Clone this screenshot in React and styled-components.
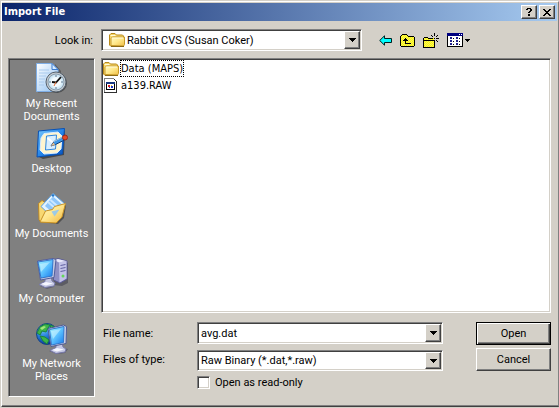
import React from "react";
import styled, { createGlobalStyle, css } from "styled-components";

const face = "#d4d0c8";
const ui = 'Roboto, "Liberation Sans", sans-serif';
const tahoma = '"DejaVu Sans Condensed", "DejaVu Sans", sans-serif';

const GlobalStyle = createGlobalStyle`
  *, *::before, *::after { box-sizing: border-box; }
  body { margin: 0; background: ${face}; }
  button, input, select { font: inherit; color: inherit; border-radius: 0; }
  svg { display: block; flex: none; }
`;

const sunken = css`
  border: 1px solid;
  border-color: #808080 #fff #fff #808080;
  box-shadow: inset 1px 1px #404040, inset -1px -1px ${face};
`;

const raised = css`
  background: ${face};
  border: 1px solid;
  border-color: #fff #404040 #404040 #fff;
  box-shadow: inset -1px -1px #808080;
`;

const Dialog = styled.main`
  display: flex;
  flex-direction: column;
  min-height: 100vh;
  padding: 1px 0 1px 1px;
  background: ${face};
  color: #000;
  font: 11px/13px ${ui};
`;

const Frame = styled.div`
  display: flex;
  flex: 1;
  flex-direction: column;
  padding: 1px 1px 1px 0;
  border: 1px solid;
  border-color: #fff #808080 #404040 #fff;
  box-shadow: inset 0 -1px #808080;
`;

const TitleBar = styled.header`
  display: flex;
  align-items: center;
  gap: 2px;
  height: 18px;
  padding: 0 2px;
  background: linear-gradient(90deg, #0a246a, #a6caf0);
`;

const Title = styled.h1`
  flex: 1;
  margin: 0;
  color: #fff;
  font: bold 11px/16px ${tahoma};
`;

const CaptionButton = styled.button`
  ${raised}
  display: grid;
  place-items: center;
  width: 16px;
  height: 14px;
  padding: 0;
`;

const LookRow = styled.div`
  display: grid;
  grid-template-columns: 91px minmax(120px, 1fr) 179px;
  align-items: center;
  column-gap: 8px;
  padding: 8px 8px 7px 0;
`;

const LookLabel = styled.label`
  text-align: right;
`;

const Tools = styled.div`
  display: flex;
  align-items: center;
  gap: 8px;
  padding-left: 9px;
`;

const ToolButton = styled.button`
  display: grid;
  place-items: center;
  height: 20px;
  padding: 0;
  border: 0;
  background: none;
`;

const Body = styled.div`
  display: flex;
  flex: 1;
  gap: 6px;
  padding: 0 6px 8px 6px;
`;

const Places = styled.nav`
  ${sunken}
  flex: none;
  width: 87px;
  padding-top: 3px;
  background: #808080;
  box-shadow: inset 1px 1px #404040;
`;

const Place = styled.button`
  display: flex;
  flex-direction: column;
  align-items: center;
  gap: 3px;
  width: 100%;
  height: 65px;
  padding: 0;
  border: 0;
  background: none;
  color: #fff;
  line-height: 13px;
`;

const Content = styled.section`
  display: flex;
  flex: 1;
  flex-direction: column;
  min-width: 0;
`;

const FileList = styled.ul`
  ${sunken}
  flex: 1;
  min-height: 120px;
  margin: 0;
  padding: 1px;
  background: #fff;
  list-style: none;
  font: 11px/13px ${tahoma};
`;

const FileItem = styled.li`
  display: flex;
  align-items: center;
  gap: 1px;
  height: 17px;
`;

const FileName = styled.span`
  padding: 1px 0;
  border: 1px dotted ${(p) => (p.$focused ? "#000" : "transparent")};
`;

const Form = styled.form`
  display: grid;
  grid-template-columns: 88px minmax(100px, 1fr) 75px;
  grid-template-rows: 23px 23px 15px;
  gap: 3px 8px;
  padding: 9px 0 8px;
`;

const FieldLabel = styled.label`
  align-self: center;
  padding-left: 2px;
`;

const Combo = styled.div`
  ${sunken}
  display: grid;
  grid-template-columns: ${(p) => (p.$icon ? "22px" : "0")} 1fr 16px;
  align-items: center;
  align-self: ${(p) => (p.$end ? "end" : "start")};
  height: ${(p) => (p.$end ? "21px" : "22px")};
  margin-right: ${(p) => (p.$icon ? "0" : "25px")};
  padding: 1px;
  background: #fff;

  > * { grid-row: 1; }
  > svg { justify-self: end; }
`;

const comboText = css`
  width: 100%;
  min-width: 0;
  height: 100%;
  border: 0;
  outline: 0;
  background: none;
  appearance: none;
`;

const ComboSelect = styled.select`
  ${comboText}
  grid-column: 2 / 4;
  padding: 0 16px 0 2px;
`;

const ComboInput = styled.input`
  ${comboText}
  grid-column: 2;
  padding: 0 2px;
`;

const DropButton = styled.span`
  ${raised}
  display: grid;
  grid-column: 3;
  place-items: center;
  height: 100%;
  pointer-events: none;
`;

const PushButton = styled.button`
  ${raised}
  padding: 0;
  ${(p) =>
    p.$primary &&
    css`
      border-color: #000;
      box-shadow: inset 1px 1px #fff, inset -1px -1px #404040, inset -2px -2px #808080;
    `}
`;

const CheckLabel = styled.label`
  display: flex;
  grid-column: 2;
  align-items: end;
  gap: 5px;
`;

const CheckBox = styled.input`
  ${sunken}
  width: 13px;
  height: 13px;
  margin: 0;
  background: #fff;
  appearance: none;
  &:checked { background: #404040; }
`;

const Triangle = () => (
  <svg width="7" height="4" shapeRendering="crispEdges" aria-hidden="true">
    <path d="M0 0h7v1H0zM1 1h5v1H1zM2 2h3v1H2zM3 3h1v1H3z" />
  </svg>
);

const FolderIcon = () => (
  <svg width="16" height="16" viewBox="0 0 16 16" aria-hidden="true">
    <defs>
      <linearGradient id="fold" x1="0" y1="0" x2="1" y2="1">
        <stop offset="0" stopColor="#fffbc4" />
        <stop offset="0.5" stopColor="#ffe88a" />
        <stop offset="1" stopColor="#efbd45" />
      </linearGradient>
    </defs>
    <path d="M.5 13V3L2 1.5h4L7.5 3h6l1 1v9l-1 1h-12z" fill="#f5d66c" stroke="#b98a1c" />
    <path d="M2 13.500V6.500L3.500 5H15.500v7.500L14.500 14z" fill="url(#fold)" stroke="#c79a2c" />
    <path d="M1.500 3.500h5M3 6h11" stroke="#fffbdc" fill="none" />
    <path d="M2 14.500h13" stroke="#8b6914" />
  </svg>
);

const RawIcon = () => (
  <svg width="16" height="16" viewBox="0 0 16 16" shapeRendering="crispEdges" aria-hidden="true">
    <path d="M1 0h10l3 3v12H1z" fill="#fff" />
    <path d="M1 0h10v1H1zM1 0h1v15H1z" fill="#808080" />
    <path d="M13 3h1v12h-1zM1 14h13v1H1zM11 1h1v1h-1zM12 2h1v1h-1z" fill="#303030" />
    <path d="M3 4h9v8H3z" fill="#000" />
    <path d="M4 6h7v5H4z" fill="#fff" />
    <path d="M3 4h9v2H3z" fill="#183880" />
    <path d="M5 7h2v2H5z" fill="#d82020" />
    <path d="M8 8h2v2H8zM6 9h1v1H6z" fill="#2038c8" />
    <path d="M8 7h1v1H8z" fill="#e6ba20" />
  </svg>
);

const HelpGlyph = () => (
  <svg width="6" height="8" shapeRendering="crispEdges" aria-hidden="true">
    <path d="M1 0h4v1H1zM0 1h2v1H0zM4 1h2v2H4zM3 3h2v1H3zM2 4h2v1H2zM2 6h2v2H2z" />
  </svg>
);

const CloseGlyph = () => (
  <svg width="8" height="7" shapeRendering="crispEdges" aria-hidden="true">
    <path d="M0 0h2v1H0zM6 0h2v1H6zM1 1h2v1H1zM5 1h2v1H5zM2 2h4v1H2zM3 3h2v1H3zM2 4h4v1H2zM1 5h2v1H1zM5 5h2v1H5zM0 6h2v1H0zM6 6h2v1H6z" />
  </svg>
);

const BackIcon = () => (
  <svg width="13" height="11" aria-hidden="true">
    <path d="M.7 5.500L5.500.8V3.500h7v4h-7v2.700z" fill="#00ffff" stroke="#002020" />
  </svg>
);

const Dither = ({ id }) => (
  <defs>
    <pattern id={id} width="2" height="2" patternUnits="userSpaceOnUse">
      <path d="M0 0h2v2H0z" fill="#ffff00" />
      <path d="M0 0h1v1H0zM1 1h1v1H1z" fill="#f2ea6a" />
    </pattern>
  </defs>
);

const UpIcon = () => (
  <svg width="15" height="13" shapeRendering="crispEdges" aria-hidden="true">
    <Dither id="up" />
    <path d="M1 2h1V1h5v1h7v10H1z" fill="url(#up)" />
    <path d="M2 0h5v1H2zM1 1h1v1H1zM7 1h1v1H7zM8 2h6v1H8zM0 2h1v10H0zM14 3h1v9h-1zM1 12h13v1H1z" />
    <path d="M5 4h1v5H5zM4 5h3v1H4zM3 6h5v1H3zM5 9h6v1H5z" />
  </svg>
);

const NewFolderIcon = () => (
  <svg width="16" height="15" shapeRendering="crispEdges" aria-hidden="true">
    <Dither id="new" />
    <path d="M1 5h10v9H1z" fill="url(#new)" />
    <path d="M1 4h4v1H1zM0 5h1v9H0zM5 5h5v1H5zM1 7h10v1H1zM11 8h1v6h-1zM0 14h12v1H0z" />
    <path d="M11 0h1v3h-1zM8 2h1v1H8zM9 3h1v1H9zM14 2h1v1h-1zM13 3h1v1h-1zM7 5h3v1H7zM13 5h3v1h-3zM11 5h1v1h-1zM13 7h1v1h-1zM14 8h1v1h-1zM11 7h1v3h-1z" />
  </svg>
);

const ViewsIcon = () => (
  <svg width="23" height="14" shapeRendering="crispEdges" aria-hidden="true">
    <path d="M0 0h16v14H0z" />
    <path d="M1 3h14v10H1z" fill="#fff" />
    <path d="M0 0h16v3H0z" fill="#000080" />
    <path d="M12 1h1v1h-1zM14 1h1v1h-1z" fill="#fff" />
    <path d="M3 4h2v2H3zM3 7h2v2H3zM3 10h2v2H3zM9 4h2v2H9zM9 7h2v2H9zM9 10h2v2H9z" fill="#20208c" />
    <path d="M6 5h1v1H6zM6 8h1v1H6zM6 11h1v1H6zM12 5h1v1h-1zM12 8h1v1h-1zM12 11h1v1h-1z" />
    <path d="M18 6h5v1h-5zM19 7h3v1h-3zM20 8h1v1h-1z" />
  </svg>
);

const RecentIcon = () => (
  <svg width="32" height="32" viewBox="0 0 32 32" aria-hidden="true">
    <defs>
      <linearGradient id="page" x1="0" y1="0" x2="1" y2="1">
        <stop offset="0" stopColor="#fff" />
        <stop offset="1" stopColor="#8fc0f2" />
      </linearGradient>
      <radialGradient id="dial">
        <stop offset="0.5" stopColor="#f5fcff" />
        <stop offset="1" stopColor="#b9dcf0" />
      </radialGradient>
    </defs>
    <path d="M2 30.500h20l3-2V9L19 2v27H2z" fill="#333" opacity=".45" />
    <path d="M.5 1.500H16l6 6V29.500H.5z" fill="url(#page)" stroke="#7faee6" />
    <path d="M16 1.500v6h6z" fill="#d6ebff" stroke="#3d7ccf" />
    <path d="M3 8h10M3 11h13M3 14h7M3 17h6M3 20h5M3 23h5" stroke="#a9caee" />
    <circle cx="21" cy="21" r="10" fill="#333" opacity=".65" />
    <circle cx="20" cy="20" r="10" fill="#c4cbd1" stroke="#55616d" />
    <circle cx="20" cy="20" r="8" fill="url(#dial)" stroke="#8c9cab" />
    <path d="M13 20h2M20 13v2M25 20h2M20 25v2" stroke="#647b91" />
    <path d="M25 15l-5 5.500-4-.5" fill="none" stroke="#111" strokeWidth="1.800" />
    <path d="M20 20l-2 4" stroke="#e26b33" />
  </svg>
);

const DesktopIcon = () => (
  <svg width="32" height="32" viewBox="0 0 32 32" aria-hidden="true">
    <defs>
      <linearGradient id="desk" x1="0" y1="0" x2="1" y2="1">
        <stop offset="0" stopColor="#7dccff" />
        <stop offset="0.5" stopColor="#2586ea" />
        <stop offset="1" stopColor="#0751bd" />
      </linearGradient>
    </defs>
    <path d="M3 6l26-2-1 24-21 4-6-3z" fill="#252525" opacity=".6" />
    <path d="M2.500 4L28.500 1.500 26.500 27 1 30z" fill="url(#desk)" stroke="#0850b4" />
    <path d="M8 6.500l14-1.500 4 4-1 13-4 4-13 1-4-4 1-12z" fill="#fff5cf" stroke="#d8ecff" />
    <path d="M10.500 9L20.500 8l-1 14-10 1z" fill="#d9efff" stroke="#2f86dc" />
    <path d="M11.500 11l7 6" stroke="#fff" strokeWidth="2" />
    <path d="M15 19l3-4.500 9-4.500 1.500 3-9 4.500z" fill="#3c98ea" stroke="#173f78" />
    <path d="M18 14.500l9-4.500" stroke="#a8dbff" />
    <circle cx="29" cy="10.500" r="2.500" fill="#e64a24" stroke="#9a2818" />
    <path d="M15 19l2.500-3.500 1.500 2.500z" fill="#efc287" />
  </svg>
);

const DocumentsIcon = () => (
  <svg width="32" height="32" viewBox="0 0 32 32" aria-hidden="true">
    <defs>
      <linearGradient id="docs" x1="0" y1="0" x2="1" y2="1">
        <stop offset="0" stopColor="#fffbc9" />
        <stop offset="0.5" stopColor="#ffe58c" />
        <stop offset="1" stopColor="#eeb43a" />
      </linearGradient>
    </defs>
    <path d="M4 30l18 2 6-6 2-13-20 6z" fill="#333" opacity=".6" />
    <path d="M2.500 11.500L6 8.500l5 3 13-2 2 3-5 18L5 30l-2-2z" fill="#f8d872" stroke="#b9872a" />
    <path d="M5 14.500L17 1.500l11.500 10L17 26z" fill="#e4f4ff" stroke="#5b9fe0" />
    <path d="M9 14L17 4.500l8.500 7.500L17 21z" fill="#8ec6fa" />
    <path d="M12 10l8 7M14.500 8l8 7" stroke="#cce8ff" strokeWidth="2" />
    <circle cx="17" cy="3.500" r="1.300" fill="#2378ca" />
    <path d="M4 30L9.500 19l7-1.500 2-3 11-3L26 25l-6 6z" fill="url(#docs)" stroke="#c79125" />
    <path d="M15.500 19.500l8-2-5 7z" fill="#8bc5f7" opacity=".85" />
  </svg>
);

const ScreenFill = ({ id }) => (
  <defs>
    <linearGradient id={id} x1="0" y1="0" x2="1" y2="1">
      <stop offset="0" stopColor="#a5f4ff" />
      <stop offset="0.5" stopColor="#5cc2ff" />
      <stop offset="1" stopColor="#1678ec" />
    </linearGradient>
  </defs>
);

const Monitor = ({ id }) => (
  <>
    <ScreenFill id={id} />
    <path d="M4 29l9-5 6 3-1 3-7 2z" fill="#303050" opacity=".4" />
    <path d="M9 20l6-1 1 5 3 2-1 3-9 1.500-6-3 6-3z" fill="#c5c8e3" stroke="#777aa9" />
    <path d="M5 27l5-2 7 1.500-7 2z" fill="#f6f7ff" />
    <path d="M1.500 4L17 1.500l3 1-2 18L4.500 23z" fill="#c1c8e2" stroke="#535d9b" />
    <path d="M2 5L17 2.500 16 19 5 21z" fill={`url(#${id})`} stroke="#3277cc" />
    <path d="M4 7l10-2-9 10z" fill="#e0fbff" opacity=".5" />
  </>
);

const ComputerIcon = () => (
  <svg width="32" height="32" viewBox="0 0 32 32" aria-hidden="true">
    <path d="M17 28l9 1 6-3V6L20 4z" fill="#303040" opacity=".45" />
    <path d="M17.500 3L22 1.500 31 4v18l-7 4-6.500-3z" fill="#8f90c4" stroke="#5b5b95" />
    <path d="M23 5.500l7.500-1.500v17.500l-7 4z" fill="#c3c3e8" />
    <path d="M18 3l4-1 8 2-7 1.500z" fill="#e8e8fb" />
    <path d="M24.500 8.500l5-1M24.500 11.500l5-1M24.500 14.500l5-1" stroke="#6161a2" />
    <circle cx="27" cy="19" r="1.500" fill="#64d95b" />
    <Monitor id="pcScreen" />
  </svg>
);

const NetworkIcon = () => (
  <svg width="32" height="32" viewBox="0 0 32 32" aria-hidden="true">
    <defs>
      <radialGradient id="globe" cx=".3" cy=".25" r=".8">
        <stop offset="0" stopColor="#71c6ff" />
        <stop offset="0.5" stopColor="#237ad8" />
        <stop offset="1" stopColor="#082c91" />
      </radialGradient>
    </defs>
    <circle cx="11" cy="12" r="10.500" fill="url(#globe)" stroke="#154683" />
    <path d="M4 5l5-3 5 1-2 3-2 4-4-1-2 4-3-2zM4 14l5 1 4 3-2 4-4-3zM14 3l5 2 1 5-4 1z" fill="#3eb449" stroke="#1c833f" />
    <path d="M4 6l4-2 2 1-4 3z" fill="#a4e77a" />
    <ScreenFill id="netScreen" />
    <path d="M13 29l13-3 6 1-3 4-8 1z" fill="#303050" opacity=".45" />
    <path d="M20 22l6-1 1 4 3 2-1 3-9 1.500-6-3 6-3z" fill="#c5c8e3" stroke="#777aa9" />
    <path d="M16 28l5-2 7 1.500-7 2z" fill="#f6f7ff" />
    <path d="M12 6.500L27.500 3l3 1.500-.5 17L15 24.500z" fill="#c9d0e6" stroke="#515b94" />
    <path d="M13.500 7.500L28 4.500l-.5 16-12 2.500z" fill="url(#netScreen)" stroke="#3277cc" />
    <path d="M15 9l10-2-8 10z" fill="#e0fbff" opacity=".5" />
  </svg>
);

const places = [
  { name: ["My Recent", "Documents"], Icon: RecentIcon },
  { name: ["Desktop"], Icon: DesktopIcon },
  { name: ["My Documents"], Icon: DocumentsIcon },
  { name: ["My Computer"], Icon: ComputerIcon },
  { name: ["My Network", "Places"], Icon: NetworkIcon },
];

const tools = [
  { label: "Back", Icon: BackIcon },
  { label: "Up one level", Icon: UpIcon },
  { label: "Create new folder", Icon: NewFolderIcon },
  { label: "Views", Icon: ViewsIcon },
];

export default function App() {
  return (
    <Dialog>
      <GlobalStyle />
      <Frame>
        <TitleBar>
          <Title>Import File</Title>
          <CaptionButton aria-label="Help"><HelpGlyph /></CaptionButton>
          <CaptionButton aria-label="Close"><CloseGlyph /></CaptionButton>
        </TitleBar>
        <LookRow>
          <LookLabel htmlFor="look">Look in:</LookLabel>
          <Combo $icon>
            <FolderIcon />
            <ComboSelect id="look">
              <option>Rabbit CVS (Susan Coker)</option>
            </ComboSelect>
            <DropButton><Triangle /></DropButton>
          </Combo>
          <Tools>
            {tools.map(({ label, Icon }) => (
              <ToolButton key={label} aria-label={label}><Icon /></ToolButton>
            ))}
          </Tools>
        </LookRow>
        <Body>
          <Places>
            {places.map(({ name, Icon }) => (
              <Place key={name[0]}>
                <Icon />
                <span>
                  {name[0]}
                  {name[1] && <><br />{name[1]}</>}
                </span>
              </Place>
            ))}
          </Places>
          <Content>
            <FileList>
              <FileItem><FolderIcon /><FileName $focused>Data (MAPS)</FileName></FileItem>
              <FileItem><RawIcon /><FileName>a139.RAW</FileName></FileItem>
            </FileList>
            <Form onSubmit={(e) => e.preventDefault()}>
              <FieldLabel htmlFor="filename">File name:</FieldLabel>
              <Combo>
                <ComboInput id="filename" defaultValue="avg.dat" />
                <DropButton><Triangle /></DropButton>
              </Combo>
              <PushButton type="submit" $primary>Open</PushButton>
              <FieldLabel htmlFor="filetype">Files of type:</FieldLabel>
              <Combo $end>
                <ComboSelect id="filetype">
                  <option>Raw Binary (*.dat,*.raw)</option>
                </ComboSelect>
                <DropButton><Triangle /></DropButton>
              </Combo>
              <PushButton type="button">Cancel</PushButton>
              <CheckLabel>
                <CheckBox type="checkbox" />
                Open as read-only
              </CheckLabel>
            </Form>
          </Content>
        </Body>
      </Frame>
    </Dialog>
  );
}
